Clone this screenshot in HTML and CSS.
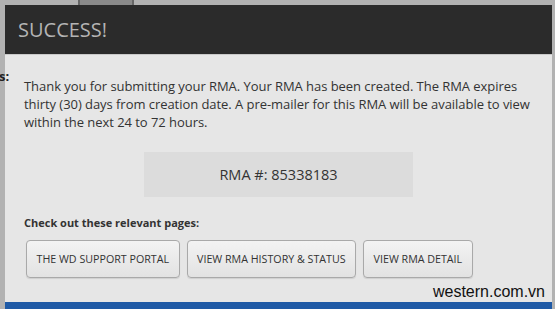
FILE: index.html
```html
<!DOCTYPE html>
<html>
<head>
<meta charset="utf-8">
<link rel="stylesheet" href="styles.css">
</head>
<body>
<div class="backdrop">
  <div class="bg-thumb"></div>
  <div class="bg-letter">s:</div>
  <div class="modal">
    <div class="modal-header">SUCCESS!</div>
    <div class="modal-body">
      <p class="intro">Thank you for submitting your RMA. Your RMA has been created. The RMA expires thirty (30) days from creation date. A pre-mailer for this RMA will be available to view within the next 24 to 72 hours.</p>
      <div class="rma-box">RMA #: 85338183</div>
      <div class="links-title">Check out these relevant pages:</div>
      <div class="links">
        <a class="btn">THE WD SUPPORT PORTAL</a>
        <a class="btn">VIEW RMA HISTORY &amp; STATUS</a>
        <a class="btn">VIEW RMA DETAIL</a>
      </div>
    </div>
    <div class="modal-footer"></div>
  </div>
  <div class="watermark">western.com.vn</div>
</div>
</body>
</html>
```
FILE: styles.css
```css
html, body {
  margin: 0;
  padding: 0;
}
body {
  width: 555px;
  height: 309px;
  overflow: hidden;
  background: #b2b2b2;
  font-family: "Open Sans", "Noto Sans", sans-serif;
}
.backdrop {
  position: relative;
  width: 555px;
  height: 309px;
  padding: 5px 3px 0 5px;
  box-sizing: border-box;
}
.bg-thumb {
  position: absolute;
  left: 78px;
  top: 0;
  width: 52px;
  height: 5px;
  background: #8a8a8a;
  border-left: 2px solid #666;
  border-right: 2px solid #666;
}
.bg-letter {
  position: absolute;
  left: -1px;
  top: 67px;
  font-size: 13px;
  font-weight: bold;
  color: #222;
}
.modal {
  height: 304px;
  background: #e6e6e6;
  display: flex;
  flex-direction: column;
}
.modal-header {
  background: #2b2b2b;
  color: #b4b4b4;
  font-size: 20px;
  height: 49px;
  line-height: 49px;
  padding-left: 13px;
  border-bottom: 1px solid #c9c9c9;
  box-sizing: content-box;
}
.modal-body {
  flex: 1;
  padding: 22px 10px 0 19px;
}
.intro {
  margin: 0;
  font-size: 13px;
  line-height: 18px;
  color: #333;
  letter-spacing: -0.05px;
}
.rma-box {
  width: 269px;
  height: 45px;
  line-height: 45px;
  margin: 21px 0 0 120px;
  background: #dcdcdc;
  text-align: center;
  font-size: 14.5px;
  color: #333;
}
.links-title {
  margin-top: 18px;
  font-size: 11px;
  font-weight: bold;
  color: #333;
  line-height: 15px;
}
.links {
  display: flex;
  gap: 7px;
  margin-top: 10px;
  padding-left: 2px;
}
.btn {
  display: block;
  height: 36px;
  line-height: 37px;
  padding: 0 9.5px;
  font-size: 10.7px;
  color: #333;
  border: 1px solid #a9a9a9;
  border-radius: 4px;
  background: linear-gradient(#f3f3f3, #e2e2e2);
  box-shadow: 0 1px 1px rgba(0,0,0,0.1);
}
.modal-footer {
  height: 7px;
  background: #1f5aa6;
}
.watermark {
  position: absolute;
  right: 10px;
  top: 283px;
  font-family: "Liberation Sans", Arial, sans-serif;
  font-size: 16px;
  color: #111;
}
```
